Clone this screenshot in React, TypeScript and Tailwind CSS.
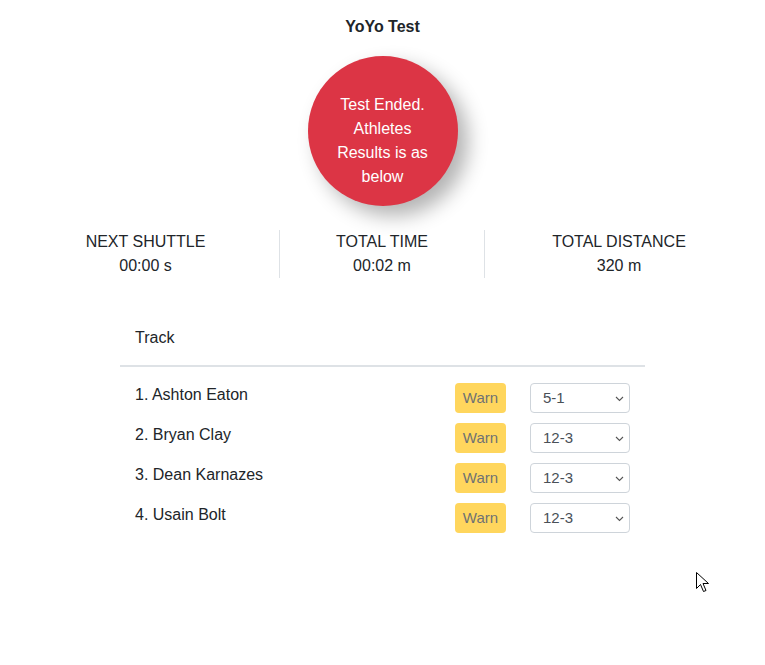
const athletes = [
  { name: "1. Ashton Eaton", level: "5-1" },
  { name: "2. Bryan Clay", level: "12-3" },
  { name: "3. Dean Karnazes", level: "12-3" },
  { name: "4. Usain Bolt", level: "12-3" },
];

function Chevron() {
  return (
    <svg width="9" height="6" viewBox="0 0 9 6" className="absolute right-[5px] top-[12px]">
      <path d="M1 1l3.5 3.5 3.5-3.5" fill="none" stroke="#555" strokeWidth="1.1" />
    </svg>
  );
}

export default function App() {
  return (
    <div className="relative min-h-[665px] bg-white text-[#212529] text-base font-['Liberation_Sans',Arial,sans-serif]">
      <h1 className="pt-[15px] text-center font-bold leading-6">YoYo Test</h1>

      <div className="mx-auto mt-[17px] w-[150px] h-[150px] rounded-full bg-[#dc3545] text-white flex items-center justify-center text-center px-5 pt-[20px] leading-6 shadow-[10px_10px_20px_rgba(0,0,0,0.3)]">
        Test Ended. Athletes Results is as below
      </div>

      <div className="mt-[24px] flex px-3 leading-6 text-center">
        <div className="w-[267px]">
          <div>NEXT SHUTTLE</div>
          <div>00:00 s</div>
        </div>
        <div className="w-[206px] border-x border-[#dee2e6]">
          <div>TOTAL TIME</div>
          <div>00:02 m</div>
        </div>
        <div className="flex-1">
          <div>TOTAL DISTANCE</div>
          <div>320 m</div>
        </div>
      </div>

      <div className="mx-auto mt-[48px] w-[525px]">
        <div className="px-[15px] pb-[15px] leading-6 border-b-2 border-[#dee2e6]">Track</div>
        <div className="pt-[11px]">
          {athletes.map((a, i) => (
            <div key={i} className="flex h-[40px] items-start">
              <div className="flex-1 pl-[15px] pt-[5px] leading-6">{a.name}</div>
              <div className="flex items-center gap-6 pt-[5px] pr-[15px]">
                <button className="w-[51px] h-[30px] rounded-[4px] bg-[#ffc107] opacity-65 text-[#212529] text-[15px]">
                  Warn
                </button>
                <div className="relative w-[100px] h-[30px] border border-[#ced4da] rounded-[4px] pl-3 text-[15px] leading-[28px] text-[#495057]">
                  {a.level}
                  <Chevron />
                </div>
              </div>
            </div>
          ))}
        </div>
      </div>

      <svg width="14" height="22" viewBox="0 0 14 22" className="absolute left-[696px] top-[572px]">
        <path d="M0.5 0.5v16l4-4 3 7 2.5-1-3-7h5.5z" fill="#fff" stroke="#000" strokeWidth="1" />
      </svg>
    </div>
  );
}
